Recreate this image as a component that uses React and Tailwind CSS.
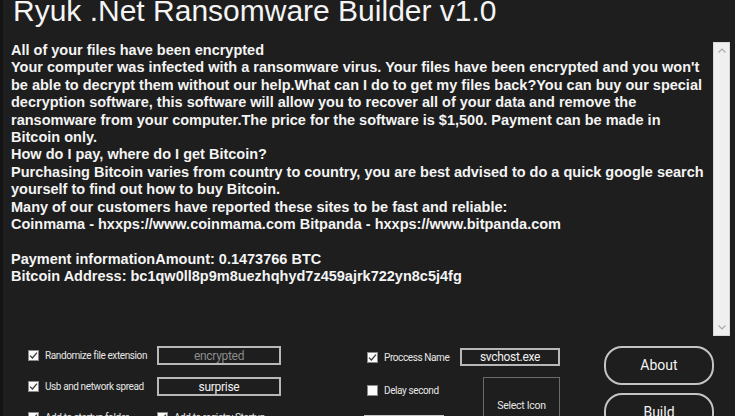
import React from 'react'

const bodyLines = [
    "All of your files have been encrypted",
    "Your computer was infected with a ransomware virus. Your files have been encrypted and you won't",
    "be able to decrypt them without our help.What can I do to get my files back?You can buy our special",
    "decryption software, this software will allow you to recover all of your data and remove the",
    "ransomware from your computer.The price for the software is $1,500. Payment can be made in",
    "Bitcoin only.",
    "How do I pay, where do I get Bitcoin?",
    "Purchasing Bitcoin varies from country to country, you are best advised to do a quick google search",
    "yourself to find out how to buy Bitcoin.",
    "Many of our customers have reported these sites to be fast and reliable:",
    "Coinmama - hxxps://www.coinmama.com Bitpanda - hxxps://www.bitpanda.com",
    "",
    "Payment informationAmount: 0.1473766 BTC",
    "Bitcoin Address:  bc1qw0ll8p9m8uezhqhyd7z459ajrk722yn8c5j4fg",
]

const Check = ({ checked }) => (
    <span className="flex h-[11px] w-[11px] shrink-0 items-center justify-center border border-[#8a8a8a] bg-[#fbfbfb]">
        {checked && (
            <svg width="9" height="9" viewBox="0 0 9 9">
                <path d="M1 4.6 L3.4 7 L8 1.6" fill="none" stroke="#3a3a3a" strokeWidth="1.3" />
            </svg>
        )}
    </span>
)

const Option = ({ checked, label }) => (
    <div className="flex items-center gap-[6px]">
        <Check checked={checked} />
        <span className="whitespace-nowrap text-[10px] tracking-[-0.4px] text-[#e6e6e6] font-['Roboto',sans-serif]">{label}</span>
    </div>
)

const Field = ({ value, dim, className }) => (
    <div className={`flex items-center justify-center border-2 border-[#b8b8b8] bg-[#1e1e1e] text-[12px] tracking-[-0.3px] font-['Roboto',sans-serif] ${dim ? 'text-[#8c8c8c]' : 'text-[#f2f2f2]'} ${className}`}>
        {value}
    </div>
)

export default function App() {
    return (
        <div className="flex h-[416px] w-[735px] flex-col overflow-hidden border-l-[3px] border-[#141414] bg-[#1e1e1e] text-white">
            {/* title */}
            <div className="flex h-[42px] shrink-0 items-start pl-[10px]">
                <h1 className="-mt-[4.4px] whitespace-nowrap text-[30px] leading-[30px] text-[#f4f4f4] font-['Liberation_Sans',Arial,sans-serif]">
                    Ryuk .Net Ransomware Builder v1.0
                </h1>
            </div>

            {/* note text + scrollbar */}
            <div className="flex h-[294px] shrink-0">
                <div className="flex-1 pl-[8px] font-['Liberation_Sans',Arial,sans-serif] text-[14.5px] font-bold leading-[17.4px] text-[#f4f4f4]">
                    {bodyLines.map((line, i) => (
                        <div key={i} className="h-[17.4px] whitespace-nowrap">{line}</div>
                    ))}
                </div>
                <div className="mr-[5px] flex w-[17px] flex-col items-center justify-between border border-[#d8d8d8] bg-[#efefef] py-[5px]">
                    <svg width="8" height="5" viewBox="0 0 8 5">
                        <path d="M0.5 4.5 L4 1 L7.5 4.5" fill="none" stroke="#a8a8a8" strokeWidth="1.1" />
                    </svg>
                    <svg width="8" height="5" viewBox="0 0 8 5">
                        <path d="M0.5 0.5 L4 4 L7.5 0.5" fill="none" stroke="#a8a8a8" strokeWidth="1.1" />
                    </svg>
                </div>
            </div>

            {/* builder options */}
            <div className="flex">
                <div className="ml-[25px] mt-[10px] flex w-[253px] flex-col gap-[12px]">
                    <div className="flex h-[19px] items-center justify-between">
                        <Option checked label="Randomize file extension" />
                        <Field value="encrypted" dim className="h-[19px] w-[124px]" />
                    </div>
                    <div className="flex h-[19px] items-center justify-between">
                        <Option checked label="Usb and network spread" />
                        <Field value="surprise" className="h-[19px] w-[124px]" />
                    </div>
                    <div className="flex h-[19px] items-center">
                        <div className="w-[129px]">
                            <Option checked label="Add to startup folder" />
                        </div>
                        <Option checked label="Add to registry Startup" />
                    </div>
                </div>

                <div className="ml-[83px] mt-[12px] flex w-[196px] flex-col">
                    <div className="flex h-[18px] items-center justify-between">
                        <div className="ml-[3px]">
                            <Option checked label="Proccess Name" />
                        </div>
                        <Field value="svchost.exe" className="h-[18px] w-[100px]" />
                    </div>
                    <div className="mt-[11px] flex">
                        <div className="flex w-[80px] flex-col">
                            <div className="ml-[3px] mt-[6px]">
                                <Option label="Delay second" />
                            </div>
                            <div className="mt-[17px] h-[20px] w-[80px] border-2 border-[#c8c8c8]" />
                        </div>
                        <div className="ml-auto flex h-[58px] w-[77px] items-center justify-center border border-[#6a6a6a] text-[10.5px] tracking-[-0.3px] text-[#e6e6e6] font-['Roboto',sans-serif]">
                            Select Icon
                        </div>
                    </div>
                </div>

                <div className="ml-[44px] mt-[10px] flex flex-col gap-[8px]">
                    <button className="flex h-[39px] w-[110px] items-center justify-center rounded-[18px] border-2 border-[#c4c4c4] text-[14px] text-[#f4f4f4] font-['Roboto',sans-serif]">
                        About
                    </button>
                    <button className="flex h-[39px] w-[110px] items-center justify-center rounded-[18px] border-2 border-[#c4c4c4] text-[14px] text-[#f4f4f4] font-['Roboto',sans-serif]">
                        Build
                    </button>
                </div>
            </div>
        </div>
    )
}
